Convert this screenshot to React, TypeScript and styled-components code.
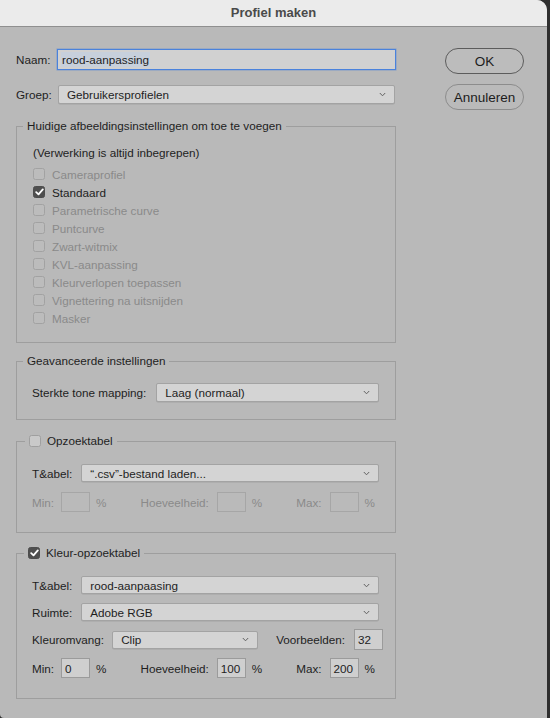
import React from 'react';
import styled, { createGlobalStyle } from 'styled-components';

const FS = '11.7px';

const Global = createGlobalStyle`
  html, body { margin: 0; padding: 0; background: #2f2f2f; }
  body { font-family: "Liberation Sans", Arial, sans-serif; -webkit-font-smoothing: antialiased; }
  #root { width: 550px; height: 718px; }
`;

const Dialog = styled.div`
  width: 547px;
  height: 718px;
  background: #b9b9b9;
  border-top-right-radius: 10px;
  border-bottom-left-radius: 4px;
  overflow: hidden;
  display: flex;
  flex-direction: column;
`;

const TitleBar = styled.div`
  height: 25px;
  padding-bottom: 1px;
  flex: none;
  background: #ebebeb;
  border-bottom: 1px solid #8f8f8f;
  display: flex;
  align-items: center;
  justify-content: center;
  font-weight: bold;
  font-size: 13px;
  color: #4a4a4a;
`;

const Body = styled.div`
  display: flex;
  align-items: flex-start;
  padding: 22px 0 0 16px;
`;

const LeftCol = styled.div`
  width: 380px;
  display: flex;
  flex-direction: column;
`;

const RightCol = styled.div`
  margin-left: 49px;
  margin-top: -1px;
  width: 79px;
  display: flex;
  flex-direction: column;
  gap: 10px;
`;

const Button = styled.button<{ $default?: boolean }>`
  height: 26px;
  border-radius: 13px;
  border: 1px solid ${p => (p.$default ? '#5c5c5c' : '#8c8c8c')};
  background: ${p => (p.$default ? '#bcbcbc' : '#bababa')};
  font-family: "Liberation Sans", Arial, sans-serif;
  font-size: 13.5px;
  color: #1c1c1c;
  padding: 0;
`;

const Row = styled.div<{ $h: number; $mt?: number; $spread?: boolean }>`
  height: ${p => p.$h}px;
  margin-top: ${p => p.$mt ?? 0}px;
  display: flex;
  align-items: center;
  justify-content: ${p => (p.$spread ? 'space-between' : 'flex-start')};
  padding-right: ${p => (p.$spread ? 4 : 0)}px;
  font-size: ${FS};
  color: #1e1e1e;
`;

const Label = styled.span<{ $w?: number; $off?: boolean }>`
  flex: none;
  width: ${p => (p.$w ? `${p.$w}px` : 'auto')};
  color: ${p => (p.$off ? '#8a8a8a' : '#1e1e1e')};
  white-space: nowrap;
`;

const TextInput = styled.div`
  flex: 1;
  height: 21px;
  box-sizing: border-box;
  background: #d1d1d1;
  border: 1px solid #4a82dc;
  box-shadow: 0 0 0 0.5px rgba(74, 130, 220, 0.5);
  display: flex;
  align-items: center;
  padding-left: 3px;
  font-size: ${FS};
  color: #1e1e1e;
`;

const Selected = styled.span`
  background: #c7d0dc;
  padding: 1px 1px;
`;

const SelectBox = styled.div<{ $ml?: number; $mr?: number; $h?: number; $w?: number }>`
  flex: ${p => (p.$w ? 'none' : '1')};
  width: ${p => (p.$w ? `${p.$w}px` : 'auto')};
  height: ${p => p.$h ?? 18}px;
  margin-left: ${p => p.$ml ?? 0}px;
  margin-right: ${p => p.$mr ?? 0}px;
  box-sizing: border-box;
  background: #d4d4d4;
  border: 1px solid #a3a3a3;
  border-radius: 2px;
  box-shadow: 0 0.5px 0 rgba(0, 0, 0, 0.12);
  display: flex;
  align-items: center;
  padding: 0 8px 0 8px;
  font-size: ${FS};
  color: #1e1e1e;
`;

const SelectText = styled.span`
  flex: 1;
  white-space: nowrap;
`;

const NumBox = styled.div<{ $off?: boolean; $h?: number; $ml?: number }>`
  flex: none;
  width: 29px;
  height: ${p => p.$h ?? 20}px;
  margin-left: ${p => p.$ml ?? 8}px;
  box-sizing: border-box;
  background: ${p => (p.$off ? '#bababa' : '#cfcfcf')};
  border: 1px solid ${p => (p.$off ? '#a6a6a6' : '#9b9b9b')};
  display: flex;
  align-items: center;
  padding-left: 3px;
  font-size: ${FS};
  color: #1e1e1e;
`;

const Pct = styled.span<{ $off?: boolean }>`
  margin-left: 6px;
  color: ${p => (p.$off ? '#8a8a8a' : '#1e1e1e')};
`;

const Cell = styled.div`
  display: flex;
  align-items: center;
`;

const Group = styled.fieldset<{ $mt: number }>`
  margin: ${p => p.$mt}px 0 0 0;
  padding: 0;
  border: 1px solid #9e9e9e;
  min-width: 0;
`;

const Legend = styled.legend<{ $ml: number }>`
  margin-left: ${p => p.$ml}px;
  padding: 0 4px;
  height: 14px;
  font-size: ${FS};
  line-height: 14px;
  color: #1e1e1e;
`;

const LegendInner = styled.span`
  display: inline-flex;
  vertical-align: top;
  align-items: center;
  gap: 6px;
  height: 14px;
`;

const Content = styled.div<{ $pt: number; $pb: number; $pl?: number }>`
  padding: ${p => p.$pt}px 16px ${p => p.$pb}px ${p => p.$pl ?? 15}px;
  display: flex;
  flex-direction: column;
`;

const CheckRow = styled.div<{ $off?: boolean }>`
  height: 18px;
  display: flex;
  align-items: center;
  gap: 7px;
  font-size: ${FS};
  color: ${p => (p.$off ? '#8a8a8a' : '#1e1e1e')};
`;

const Box = styled.span<{ $on?: boolean; $off?: boolean }>`
  flex: none;
  width: 12px;
  height: 12px;
  box-sizing: border-box;
  border-radius: 2.5px;
  border: 1px solid ${p => (p.$on ? '#4d4d4d' : p.$off ? '#a2a2a2' : '#9f9f9f')};
  background: ${p => (p.$on ? '#4f4f4f' : p.$off ? '#bcbcbc' : '#c9c9c9')};
  display: flex;
  align-items: center;
  justify-content: center;
`;

const Check = ({ on, off }: { on?: boolean; off?: boolean }) => (
  <Box $on={on} $off={off}>
    {on && (
      <svg width="9" height="8" viewBox="0 0 9 8">
        <path d="M1.2 4.2 L3.5 6.4 L7.8 1.4" fill="none" stroke="#fff" strokeWidth="1.8" strokeLinecap="round" strokeLinejoin="round" />
      </svg>
    )}
  </Box>
);

const Chevron = () => (
  <svg width="7" height="5" viewBox="0 0 7 5">
    <path d="M0.8 1 L3.5 3.8 L6.2 1" fill="none" stroke="#626262" strokeWidth="1" />
  </svg>
);

const Select = (props: { text: string; ml?: number; mr?: number; h?: number; w?: number }) => (
  <SelectBox $ml={props.ml} $mr={props.mr} $h={props.h} $w={props.w}>
    <SelectText>{props.text}</SelectText>
    <Chevron />
  </SelectBox>
);

const MinMaxRow = ({ off, vals, mt }: { off?: boolean; vals: string[]; mt: number }) => (
  <Row $h={20} $mt={mt} $spread>
    <Cell>
      <Label $off={off}>Min:</Label>
      <NumBox $off={off} $ml={7}>{vals[0]}</NumBox>
      <Pct $off={off}>%</Pct>
    </Cell>
    <Cell>
      <Label $off={off}>Hoeveelheid:</Label>
      <NumBox $off={off} $ml={8}>{vals[1]}</NumBox>
      <Pct $off={off}>%</Pct>
    </Cell>
    <Cell>
      <Label $off={off}>Max:</Label>
      <NumBox $off={off} $ml={8}>{vals[2]}</NumBox>
      <Pct $off={off}>%</Pct>
    </Cell>
  </Row>
);

const settings = [
  { t: 'Cameraprofiel', on: false },
  { t: 'Standaard', on: true },
  { t: 'Parametrische curve', on: false },
  { t: 'Puntcurve', on: false },
  { t: 'Zwart-witmix', on: false },
  { t: 'KVL-aanpassing', on: false },
  { t: 'Kleurverlopen toepassen', on: false },
  { t: 'Vignettering na uitsnijden', on: false },
  { t: 'Masker', on: false },
];

export default function App() {
  return (
    <>
      <Global />
      <Dialog>
        <TitleBar>Profiel maken</TitleBar>
        <Body>
          <LeftCol>
            <Row $h={21}>
              <Label $w={41}>Naam:</Label>
              <TextInput>
                <Selected>rood-aanpassing</Selected>
              </TextInput>
            </Row>
            <Row $h={19} $mt={15}>
              <Label $w={41}>Groep:</Label>
              <Select text="Gebruikersprofielen" ml={1} mr={1} h={19} />
            </Row>

            <Group $mt={15}>
              <Legend $ml={6}>Huidige afbeeldingsinstellingen om toe te voegen</Legend>
              <Content $pt={10} $pb={15} $pl={16}>
                <CheckRow style={{ marginBottom: 4 }}>(Verwerking is altijd inbegrepen)</CheckRow>
                {settings.map(s => (
                  <CheckRow key={s.t} $off={!s.on}>
                    <Check on={s.on} off={!s.on} />
                    {s.t}
                  </CheckRow>
                ))}
              </Content>
            </Group>

            <Group $mt={11}>
              <Legend $ml={6}>Geavanceerde instellingen</Legend>
              <Content $pt={15} $pb={17}>
                <Row $h={19}>
                  <Label>Sterkte tone mapping:</Label>
                  <Select text="Laag (normaal)" ml={10} h={19} />
                </Row>
              </Content>
            </Group>

            <Group $mt={14}>
              <Legend $ml={8}>
                <LegendInner>
                  <Check />
                  Opzoektabel
                </LegendInner>
              </Legend>
              <Content $pt={16} $pb={20}>
                <Row $h={18}>
                  <Label>T&amp;abel:</Label>
                  <Select text={'\u201C.csv\u201D-bestand laden...'} ml={9} />
                </Row>
                <MinMaxRow off vals={['', '', '']} mt={10} />
              </Content>
            </Group>

            <Group $mt={13}>
              <Legend $ml={7}>
                <LegendInner>
                  <Check on />
                  Kleur-opzoektabel
                </LegendInner>
              </Legend>
              <Content $pt={16} $pb={20}>
                <Row $h={18}>
                  <Label>T&amp;abel:</Label>
                  <Select text="rood-aanpaasing" ml={9} />
                </Row>
                <Row $h={18} $mt={9}>
                  <Label>Ruimte:</Label>
                  <Select text="Adobe RGB" ml={9} />
                </Row>
                <Row $h={21} $mt={8}>
                  <Label>Kleuromvang:</Label>
                  <Select text="Clip" ml={8} w={146} />
                  <Label style={{ marginLeft: 18 }}>Voorbeelden:</Label>
                  <NumBox $h={21} $ml={9}>32</NumBox>
                </Row>
                <MinMaxRow vals={['0', '100', '200']} mt={8} />
              </Content>
            </Group>
          </LeftCol>
          <RightCol>
            <Button $default>OK</Button>
            <Button>Annuleren</Button>
          </RightCol>
        </Body>
      </Dialog>
    </>
  );
}
